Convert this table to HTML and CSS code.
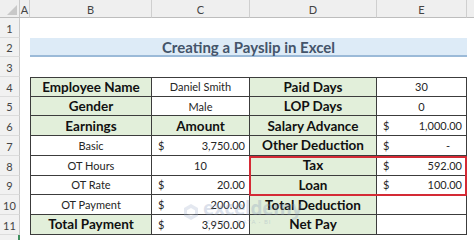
FILE: index.html
```html
<!DOCTYPE html>
<html>
<head>
<meta charset="utf-8">
<link rel="stylesheet" href="styles.css">
</head>
<body>
<div class="sheet">
  <div class="corner"><svg width="10" height="10" viewBox="0 0 10 10"><polygon points="10,0 10,10 0,10" fill="#c8c8c8"/></svg></div>
  <div class="colhdr">A</div>
  <div class="colhdr">B</div>
  <div class="colhdr">C</div>
  <div class="colhdr">D</div>
  <div class="colhdr">E</div>
  <div class="colhdr last"></div>

  <div class="rowhdr">1</div>
  <div class="rowhdr">2</div>
  <div class="title">Creating a Payslip in Excel</div>
  <div class="rowhdr">3</div>

  <div class="rowhdr">4</div>
  <div class="cell cb top label">Employee Name</div>
  <div class="cell cc top">Daniel Smith</div>
  <div class="cell cd top label">Paid Days</div>
  <div class="cell ce top">30</div>

  <div class="rowhdr">5</div>
  <div class="cell cb label">Gender</div>
  <div class="cell cc">Male</div>
  <div class="cell cd label">LOP Days</div>
  <div class="cell ce">0</div>

  <div class="rowhdr">6</div>
  <div class="cell cb label">Earnings</div>
  <div class="cell cc label">Amount</div>
  <div class="cell cd label">Salary Advance</div>
  <div class="cell ce money"><span>$</span><span>1,000.00</span></div>

  <div class="rowhdr">7</div>
  <div class="cell cb">Basic</div>
  <div class="cell cc money"><span>$</span><span>3,750.00</span></div>
  <div class="cell cd label">Other Deduction</div>
  <div class="cell ce money"><span>$</span><span class="dash">-</span></div>

  <div class="rowhdr">8</div>
  <div class="cell cb">OT Hours</div>
  <div class="cell cc">10</div>
  <div class="cell cd label">Tax</div>
  <div class="cell ce money"><span>$</span><span>592.00</span></div>

  <div class="rowhdr">9</div>
  <div class="cell cb">OT Rate</div>
  <div class="cell cc money"><span>$</span><span>20.00</span></div>
  <div class="cell cd label">Loan</div>
  <div class="cell ce money"><span>$</span><span>100.00</span></div>

  <div class="rowhdr">10</div>
  <div class="cell cb">OT Payment</div>
  <div class="cell cc money"><span>$</span><span>200.00</span></div>
  <div class="cell cd label">Total Deduction</div>
  <div class="cell ce"></div>

  <div class="rowhdr">11</div>
  <div class="cell cb label">Total Payment</div>
  <div class="cell cc money"><span>$</span><span>3,950.00</span></div>
  <div class="cell cd label">Net Pay</div>
  <div class="cell ce"></div>

  <div class="rowhdr sel"></div>

  <div class="highlight"></div>
  <div class="watermark">
    <svg class="wm-icon" width="18" height="18" viewBox="0 0 18 18"><path d="M9 1 L16 5 L16 13 L9 17 L2 13 L2 5 Z" fill="#9fb0cc"/><path d="M9 5 L13 7.3 L13 10.7 L9 13 L5 10.7 L5 7.3 Z" fill="#ffffff"/></svg>
    <div class="wm-text">
      <span class="wm-name">exceldemy</span>
      <span class="wm-sub">EXCEL · DATA · BI</span>
    </div>
  </div>
</div>
</body>
</html>
```

FILE: styles.css
```css
html, body {
  margin: 0;
  padding: 0;
  background: #ffffff;
}

.sheet {
  position: relative;
  width: 474px;
  height: 240px;
  overflow: hidden;
  display: grid;
  grid-template-columns: 20px 10px 122px 98px 127px 90px 7px;
  grid-template-rows: 18px repeat(11, 19.7px) 20px;
  font-family: "Lato", "Open Sans", sans-serif;
  color: #222;
}

.corner {
  grid-column: 1;
  background: #efefef;
  border-right: 1px solid #c9c9c9;
  border-bottom: 1px solid #bdbdbd;
  box-sizing: border-box;
  display: flex;
  align-items: flex-end;
  justify-content: flex-end;
  padding: 0 2px 2px 0;
}

.colhdr {
  background: #efefef;
  border-right: 1px solid #cfcfcf;
  border-bottom: 1px solid #bdbdbd;
  box-sizing: border-box;
  font-size: 11px;
  color: #444;
  display: flex;
  align-items: center;
  justify-content: center;
  padding-top: 1px;
}
.colhdr.last {
  border-right: none;
}

.rowhdr {
  grid-column: 1;
  background: #f1f1f1;
  border-right: 1px solid #c9c9c9;
  border-bottom: 1px solid #dcdcdc;
  box-sizing: border-box;
  font-size: 11px;
  color: #444;
  display: flex;
  align-items: flex-end;
  justify-content: center;
  padding-bottom: 2px;
}
.rowhdr.sel {
  border-right: 2px solid #3f8f5f;
}

.title {
  grid-column: 3 / 7;
  background: #ddebf7;
  border-bottom: 2px solid #9bbad8;
  box-sizing: border-box;
  color: #44546a;
  font-weight: 700;
  font-size: 15px;
  display: flex;
  align-items: center;
  justify-content: center;
  padding-top: 1px;
}

.cell {
  box-sizing: border-box;
  border-right: 1px solid #3c3c3c;
  border-bottom: 1px solid #3c3c3c;
  font-size: 11px;
  color: #262626;
  display: flex;
  align-items: center;
  justify-content: center;
  white-space: nowrap;
  background: #ffffff;
}
.cb { grid-column: 3; border-left: 1px solid #3c3c3c; }
.cc { grid-column: 4; }
.cd { grid-column: 5; }
.ce { grid-column: 6; }
.top { border-top: 1px solid #3c3c3c; }

.label {
  background: #e2efda;
  font-weight: 700;
  font-size: 13.5px;
  color: #111;
}

.money {
  justify-content: space-between;
  padding: 0 4px 0 6px;
}
.dash {
  padding-right: 12px;
}

.highlight {
  position: absolute;
  grid-column: 5 / 7;
  grid-row: 9 / 11;
  top: 0;
  left: -1px;
  right: 0;
  bottom: -1px;
  border: 2px solid #d42a35;
  border-radius: 1px;
  z-index: 2;
  pointer-events: none;
}

.watermark {
  position: absolute;
  left: 182px;
  top: 199px;
  display: flex;
  align-items: center;
  gap: 3px;
  opacity: 0.28;
  z-index: 3;
  pointer-events: none;
}
.wm-text {
  display: flex;
  flex-direction: column;
  line-height: 1;
}
.wm-name {
  font-family: "Open Sans", sans-serif;
  font-weight: 700;
  font-size: 19px;
  color: #7f93b8;
  letter-spacing: -0.3px;
}
.wm-sub {
  font-size: 6px;
  color: #7f93b8;
  letter-spacing: 1px;
  margin-top: 1px;
  padding-left: 4px;
}
```
